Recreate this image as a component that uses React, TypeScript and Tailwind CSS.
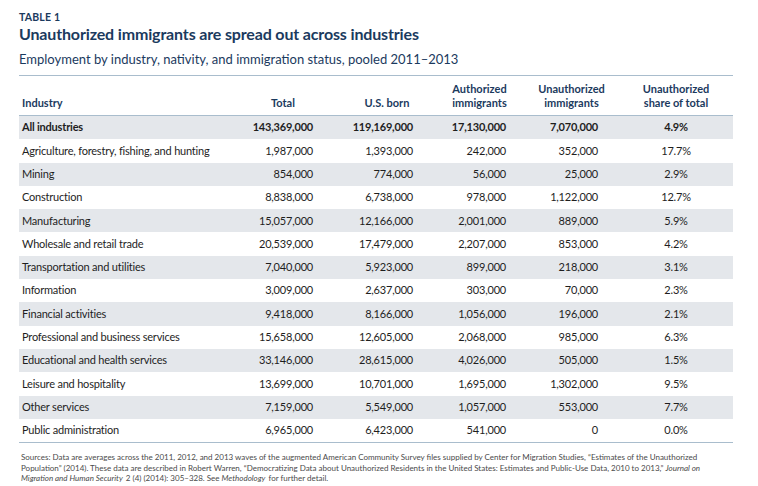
const rows: [string, string, string, string, string, string][] = [
  ['Agriculture, forestry, fishing, and hunting', '1,987,000', '1,393,000', '242,000', '352,000', '17.7%'],
  ['Mining', '854,000', '774,000', '56,000', '25,000', '2.9%'],
  ['Construction', '8,838,000', '6,738,000', '978,000', '1,122,000', '12.7%'],
  ['Manufacturing', '15,057,000', '12,166,000', '2,001,000', '889,000', '5.9%'],
  ['Wholesale and retail trade', '20,539,000', '17,479,000', '2,207,000', '853,000', '4.2%'],
  ['Transportation and utilities', '7,040,000', '5,923,000', '899,000', '218,000', '3.1%'],
  ['Information', '3,009,000', '2,637,000', '303,000', '70,000', '2.3%'],
  ['Financial activities', '9,418,000', '8,166,000', '1,056,000', '196,000', '2.1%'],
  ['Professional and business services', '15,658,000', '12,605,000', '2,068,000', '985,000', '6.3%'],
  ['Educational and health services', '33,146,000', '28,615,000', '4,026,000', '505,000', '1.5%'],
  ['Leisure and hospitality', '13,699,000', '10,701,000', '1,695,000', '1,302,000', '9.5%'],
  ['Other services', '7,159,000', '5,549,000', '1,057,000', '553,000', '7.7%'],
  ['Public administration', '6,965,000', '6,423,000', '541,000', '0', '0.0%'],
];

const grid = 'grid grid-cols-[229px_70px_100px_93px_92px_130px]';

function Row({ cells, shaded, bold }: { cells: string[]; shaded: boolean; bold?: boolean }) {
  return (
    <div className={`${grid} h-[23.3px] items-center ${shaded ? 'bg-[#e4e7eb]' : ''} ${bold ? 'font-bold' : ''} text-[11px] text-[#1e1e1e] tracking-[-0.2px]`}>
      <div className="pl-[3px] whitespace-nowrap">{cells[0]}</div>
      <div className="text-right pr-[5px]">{cells[1]}</div>
      <div className="text-right pr-[5px]">{cells[2]}</div>
      <div className="text-right pr-[5px]">{cells[3]}</div>
      <div className="text-right pr-[5px]">{cells[4]}</div>
      <div className="text-center pl-[16px]">{cells[5]}</div>
    </div>
  );
}

export default function App() {
  return (
    <div className="w-[758px] h-[486px] bg-white font-['Lato',sans-serif] pt-[11px] pl-[19px]">
      <div className="text-[10.5px] font-bold text-[#1b3a5e] leading-[13px] tracking-[0.2px]">TABLE 1</div>
      <h1 className="text-[16px] font-bold text-[#1b3a5e] leading-[20px] tracking-[-0.15px]">
        Unauthorized immigrants are spread out across industries
      </h1>
      <div className="text-[13px] text-[#1b3a5e] leading-[18px] mt-[6px]">
        Employment by industry, nativity, and immigration status, pooled 2011–2013
      </div>
      <div className="w-[714px] mt-[7px] border-t-[1.5px] border-[#a9bdcd]">
        <div className={`${grid} h-[40px] items-end pb-[5px] text-[11px] font-bold text-[#1b3a5e] leading-[14px] border-b-[1.5px] border-[#a9bdcd]`}>
          <div className="pl-[3px]">Industry</div>
          <div className="flex flex-col items-center">Total</div>
          <div className="flex flex-col items-center pl-[38px] whitespace-nowrap">U.S. born</div>
          <div className="flex flex-col items-center pl-[30px] whitespace-nowrap">
            <span>Authorized</span>
            <span>immigrants</span>
          </div>
          <div className="flex flex-col items-center pl-[29px] whitespace-nowrap">
            <span>Unauthorized</span>
            <span>immigrants</span>
          </div>
          <div className="flex flex-col items-center pl-[16px] whitespace-nowrap">
            <span>Unauthorized</span>
            <span>share of total</span>
          </div>
        </div>
        <div className="border-b-[1.5px] border-[#a9bdcd]">
          <Row cells={['All industries', '143,369,000', '119,169,000', '17,130,000', '7,070,000', '4.9%']} shaded bold />
          {rows.map((r, i) => (
            <Row key={r[0]} cells={r} shaded={i % 2 === 1} />
          ))}
        </div>
      </div>
      <p className="w-[700px] mt-[9px] text-[8px] leading-[10.6px] text-[#4a4a4a] pl-[2px]">
        Sources: Data are averages across the 2011, 2012, and 2013 waves of the augmented American Community Survey files supplied by Center for Migration Studies, “Estimates of the Unauthorized Population” (2014). These data are described in Robert Warren, “Democratizing Data about Unauthorized Residents in the United States: Estimates and Public-Use Data, 2010 to 2013,” <i className="pr-[1px]">Journal on Migration and Human Security</i> 2 (4) (2014): 305–328. See <i className="pr-[1px]">Methodology</i> for further detail.
      </p>
    </div>
  );
}
